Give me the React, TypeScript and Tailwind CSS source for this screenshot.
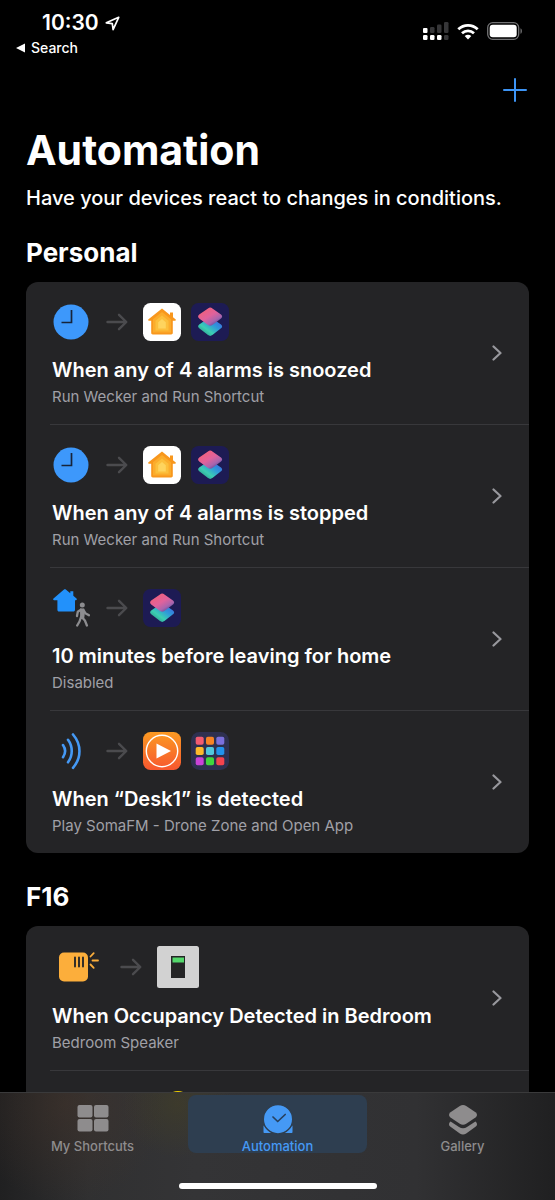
import type { ReactNode } from "react";

function Arrow() {
  return (
    <svg viewBox="0 0 22 20" className="h-5 w-[22px] shrink-0" fill="none" stroke="#4b4b4e" strokeWidth="2.400" strokeLinecap="round" strokeLinejoin="round" aria-hidden="true">
      <path d="M1.500 10H20M13 2.800 20.300 10 13 17.200" />
    </svg>
  );
}

function ClockIcon() {
  return (
    <svg viewBox="0 0 38 38" className="size-[38px]" aria-hidden="true">
      <circle cx="19" cy="19" r="17.500" fill="#3d98fb" />
      <path d="M19.500 7v12.500H9.500" fill="none" stroke="#17243a" strokeWidth="1.700" />
    </svg>
  );
}

function HomeAppIcon() {
  return (
    <svg viewBox="0 0 38 38" className="size-[38px]" aria-hidden="true">
      <rect width="38" height="38" rx="7.500" fill="#fff" />
      <path d="M19 5.500 5.500 16.300c-.7.600-.4 1.500.500 1.500h2.200v12c0 1 .6 1.600 1.600 1.600h18.400c1 0 1.600-.6 1.600-1.600v-12H32c.9 0 1.200-.9.500-1.500L30 14.300V9.500h-3v2.400Z" fill="#f8971d" />
      <path d="m19 9-9 7.300V29.500h18V16.300Z" fill="#fbac2c" />
      <path d="m19 12.500-6.500 5.300v9.700h13v-9.700Z" fill="#fcbf3c" />
      <path d="m19 16-3.800 3.200v6.300h7.600v-6.300Z" fill="#fed45e" />
    </svg>
  );
}

function ShortcutsAppIcon({ id }: { id: string }) {
  return (
    <svg viewBox="0 0 38 38" className="size-[38px]" aria-hidden="true">
      <defs>
        <linearGradient id={id + "-top"} x1="0.200" y1="0.100" x2="0.850" y2="0.900">
          <stop offset="0" stopColor="#f0607a" />
          <stop offset="0.450" stopColor="#e0629c" />
          <stop offset="0.750" stopColor="#a865ae" />
          <stop offset="1" stopColor="#54479a" />
        </linearGradient>
        <linearGradient id={id + "-low"} x1="0.200" y1="0.900" x2="0.900" y2="0.200">
          <stop offset="0" stopColor="#2f9f92" />
          <stop offset="0.300" stopColor="#3ccfb2" />
          <stop offset="0.650" stopColor="#2f9bd8" />
          <stop offset="1" stopColor="#3b6fe0" />
        </linearGradient>
      </defs>
      <rect width="38" height="38" rx="7.500" fill="#1d1b54" />
      <path d="M17 15.500c1.400-1 3-1 4.400 0l8.600 6c1.500 1.100 1.500 2.700 0 3.800l-8.600 6.800c-1.400 1.100-3 1.100-4.400 0l-8.800-6.800c-1.500-1.200-1.500-2.700 0-3.800Z" fill={"url(#" + id + "-low)"} />
      <path d="M17 5.400c1.400-1.100 3-1.100 4.400 0l8.600 6.200c1.500 1.100 1.500 2.800 0 3.900l-8.600 6.500c-1.400 1.100-3 1.100-4.400 0l-8.800-6.500c-1.500-1.100-1.500-2.800 0-3.900Z" fill={"url(#" + id + "-top)"} />
    </svg>
  );
}

function LeavingIcon() {
  return (
    <svg viewBox="0 0 38 38" className="size-[38px]" aria-hidden="true">
      <path d="M11.700.8c.8-.6 1.600-.6 2.400 0l4.200 3.400V2.300h3v4.500l3.200 2.700c.8.700.3 1.700-.7 1.700H23v9.500c0 1.200-.6 1.800-1.800 1.800h-14c-1.200 0-1.800-.6-1.800-1.800v-9.500H2.200c-1 0-1.500-1-.7-1.700Z" fill="#2291fb" />
      <circle cx="30.300" cy="16" r="2.500" fill="#8d8d90" />
      <path d="m30 21-.3 7 3.200 3.500 2 5M29 28l-1.500 4.500-2.300 4M28.800 20.700l-3 2-.8 4.300M31.500 21l2.200 3.500 3.300 1.800" fill="none" stroke="#8d8d90" strokeWidth="2.300" strokeLinecap="round" strokeLinejoin="round" />
      <path d="M28 19.600h4.200l.7 4.400-.7 5.500h-4Z" fill="#8d8d90" />
    </svg>
  );
}

function WavesIcon() {
  return (
    <svg viewBox="0 0 38 38" className="size-[38px]" fill="none" stroke="#4599f5" strokeWidth="2.600" strokeLinecap="round" aria-hidden="true">
      <path d="M11 13c2.600 3.700 2.600 8.500 0 12.200M16 7.800c5 6.600 5 15.900 0 22.500M21 2.500c8.600 10 8.600 23.300 0 33.300" />
    </svg>
  );
}

function PlayerAppIcon() {
  return (
    <svg viewBox="0 0 38 38" className="size-[38px]" aria-hidden="true">
      <defs>
        <linearGradient id="player-bg" x1="0" y1="0" x2="0" y2="1">
          <stop offset="0" stopColor="#fb9a22" />
          <stop offset="1" stopColor="#f7572f" />
        </linearGradient>
      </defs>
      <rect width="38" height="38" rx="7.500" fill="url(#player-bg)" />
      <circle cx="19" cy="19" r="15.700" fill="none" stroke="#fff" strokeWidth="1.400" />
      <path d="M13.500 11.500v15L28 19Z" fill="#fff" />
    </svg>
  );
}

const tileColors = ["#f25b70", "#f78324", "#7b70dd", "#fdb92b", "#51c8dc", "#2292ec", "#ca43d8", "#40d63d", "#f5434d"];

function GridAppIcon() {
  return (
    <svg viewBox="0 0 38 38" className="size-[38px]" aria-hidden="true">
      <rect width="38" height="38" rx="8.500" fill="#2e3050" />
      {tileColors.map((color, i) => (
        <rect key={color} x={4.7 + (i % 3) * 10.3} y={4.7 + Math.floor(i / 3) * 10.3} width="8" height="8" rx="1.800" fill={color} />
      ))}
    </svg>
  );
}

function SensorIcon() {
  return (
    <svg viewBox="0 0 52 42" className="h-[42px] w-[52px]" aria-hidden="true">
      <rect x="7" y="6.500" width="29" height="29" rx="5" fill="#fcae3b" />
      <path d="M23 11.500v9M27 11.500v9M31 11.500v9" stroke="#2b2927" strokeWidth="1.900" strokeLinecap="round" />
      <path d="m38.500 10.500 3.200-3.400M40.500 14.500h5.500M38.500 18.500l3.200 3.300" stroke="#fcae3b" strokeWidth="1.800" strokeLinecap="round" />
    </svg>
  );
}

function SwitchIcon() {
  return (
    <svg viewBox="0 0 42 42" className="size-[42px]" aria-hidden="true">
      <rect width="42" height="42" rx="2.500" fill="#d2d2d2" />
      <rect x="14" y="10" width="14" height="22" fill="#252526" />
      <rect x="15.500" y="11.500" width="11.500" height="5" fill="#54d86b" />
    </svg>
  );
}

function LampIcon() {
  return (
    <svg viewBox="0 0 42 42" className="size-[42px]" aria-hidden="true">
      <circle cx="21" cy="13" r="13" fill="#f0d000" />
    </svg>
  );
}

function Chevron() {
  return (
    <svg viewBox="0 0 10 16" className="h-4 w-[10px] shrink-0" fill="none" stroke="#98989d" strokeWidth="2.200" strokeLinecap="round" strokeLinejoin="round" aria-hidden="true">
      <path d="m1.500 1.500 7 6.500-7 6.500" />
    </svg>
  );
}

type RowProps = { lead: ReactNode; apps: ReactNode; title?: string; detail?: string };

function Row({ lead, apps, title, detail }: RowProps) {
  return (
    <li className="group">
      <button type="button" className="flex w-full items-center py-[14px] pr-[27px] pl-[26px] text-left">
        <span className="flex min-w-0 flex-1 flex-col pt-[6px]">
          <span className="mb-[14px] flex min-h-10 items-center">
            {lead}
            <span className="mr-[15px] ml-4 flex">
              <Arrow />
            </span>
            <span className="flex gap-[10px]">{apps}</span>
          </span>
          <span className="truncate text-xl leading-7 font-semibold text-white">{title}</span>
          <span className="truncate text-[15px] leading-[26px] text-[#a0a0a7]">{detail}</span>
        </span>
        <Chevron />
      </button>
      <div className="ml-6 h-px bg-[#38383b] group-last:hidden" />
    </li>
  );
}

function Section({ title, children }: { title: string; children: ReactNode }) {
  return (
    <section>
      <h2 className="mb-[13px] text-[26px] leading-8 font-bold">{title}</h2>
      <ul className="overflow-hidden rounded-xl bg-[#242426]">{children}</ul>
    </section>
  );
}

function StatusBar() {
  return (
    <header className="flex shrink-0 items-start justify-between pt-[10px] pr-8 pl-4">
      <div>
        <div className="flex items-center gap-[6px] pl-[26px] text-[21px] leading-[26px] font-semibold">
          <span>10:30</span>
          <svg viewBox="0 0 15 15" className="size-[15px]" fill="none" stroke="#fff" strokeWidth="1.700" strokeLinejoin="round" aria-hidden="true">
            <path d="M13.700 1.300 1.300 6.800l6 .8.800 6Z" />
          </svg>
        </div>
        <button type="button" className="flex items-center gap-[6px] text-[14px] leading-6 font-medium">
          <svg viewBox="0 0 9 10" className="h-[10px] w-[9px]" fill="#fff" aria-hidden="true">
            <path d="M9 .5v9L0 5Z" />
          </svg>
          Search
        </button>
      </div>
      <div className="flex h-[42px] items-center gap-2">
        <svg viewBox="0 0 26 18" className="h-[18px] w-[26px]" aria-hidden="true">
          <g fill="#fff">
            <rect y="6" width="4.500" height="5" rx="1" />
            <rect y="13" width="4.500" height="5" rx="1.300" />
            <rect x="7" y="13" width="4.500" height="5" rx="1.300" />
            <rect x="14" y="13" width="4.500" height="5" rx="1.300" />
          </g>
          <g fill="#363638">
            <rect x="7" y="5" width="4.500" height="6" rx="1.300" />
            <rect x="14" y="2.500" width="4.500" height="8.500" rx="1.300" />
            <rect x="21" y="0" width="4.500" height="11" rx="1.300" />
            <rect x="21" y="13" width="4.500" height="5" rx="1.300" />
          </g>
        </svg>
        <svg viewBox="0 0 22 17" className="h-[17px] w-[22px]" fill="none" stroke="#fff" strokeWidth="2.800" aria-hidden="true">
          <path d="M1.300 6.300c5.500-5.300 13.900-5.300 19.400 0M5 10.300c3.500-3.200 8.500-3.200 12 0" />
          <path d="M7.700 13c2-1.700 4.600-1.700 6.600 0L11 16.500Z" fill="#fff" stroke="none" />
        </svg>
        <svg viewBox="0 0 36 18" className="h-[18px] w-9" aria-hidden="true">
          <rect x=".7" y=".7" width="31" height="16.600" rx="5" fill="none" stroke="#727274" strokeWidth="1.300" />
          <rect x="2.700" y="2.700" width="27" height="12.600" rx="3" fill="#fff" />
          <path d="M33.500 6.200c1.900.7 1.900 4.900 0 5.600Z" fill="#727274" />
        </svg>
      </div>
    </header>
  );
}

function GridTabIcon() {
  return (
    <svg viewBox="0 0 32 34" className="h-[34px] w-8 shrink-0" fill="currentColor" aria-hidden="true">
      <rect x=".5" y="3" width="15" height="12.500" rx="2" />
      <rect x="17" y="3" width="14.500" height="12.500" rx="2" />
      <rect x=".5" y="17" width="15" height="12.500" rx="2" />
      <rect x="17" y="17" width="14.500" height="12.500" rx="2" />
    </svg>
  );
}

function ClockTabIcon() {
  return (
    <svg viewBox="0 0 32 34" className="h-[34px] w-8 shrink-0" aria-hidden="true">
      <path d="M1.500 23.500V30c0 .6.400 1 1 1H10ZM30.500 23.500V30c0 .6-.4 1-1 1H22Z" fill="currentColor" />
      <circle cx="16" cy="17.200" r="14.700" fill="currentColor" stroke="#2e3e50" strokeWidth="1.400" />
      <path d="m11 15 4.700 4.500 7.500-7" fill="none" stroke="#28415e" strokeWidth="1.700" strokeLinecap="round" strokeLinejoin="round" />
    </svg>
  );
}

function LayersTabIcon() {
  return (
    <svg viewBox="0 0 32 34" className="h-[34px] w-8 shrink-0" fill="currentColor" aria-hidden="true">
      <path d="M12.800 4c2-1.300 4.400-1.300 6.400 0l9.300 6.200c2 1.400 2 3.900 0 5.300l-9.300 6.300c-2 1.300-4.400 1.300-6.400 0l-9.300-6.300c-2-1.400-2-3.900 0-5.300Z" />
      <path d="M3.600 19.500 12 25.100c2.500 1.600 5.500 1.600 8 0l8.400-5.600c2.200 1.500 2.100 4 .1 5.300l-9.300 6.700c-2 1.400-4.400 1.400-6.400 0l-9.300-6.700c-2-1.300-2.100-3.800.1-5.300Z" />
    </svg>
  );
}

function Tab({ label, icon, active = false }: { label: string; icon: ReactNode; active?: boolean }) {
  return (
    <button
      type="button"
      aria-pressed={active}
      className={
        active
          ? "flex h-[58px] flex-1 flex-col items-center gap-1 rounded-lg bg-[#2e3e50] pt-[7px] text-[#4599f5]"
          : "flex h-[58px] flex-1 flex-col items-center gap-1 rounded-lg pt-[7px] text-[#8e8c8d]"
      }
    >
      {icon}
      <span className="text-[13px] leading-3 font-medium">{label}</span>
    </button>
  );
}

export default function App() {
  return (
    <div className="flex h-screen flex-col overflow-hidden bg-black font-['Inter','Liberation_Sans',sans-serif] text-white">
      <StatusBar />
      <main className="min-h-0 flex-1 overflow-y-auto px-[26px] [scrollbar-width:none]">
        <div className="flex justify-end pt-[17px] pr-[1px]">
          <button type="button" aria-label="Add" className="flex">
            <svg viewBox="0 0 26 26" className="size-[26px]" fill="none" stroke="#3d94f5" strokeWidth="2" strokeLinecap="round" aria-hidden="true">
              <path d="M13 2v22M2 13h22" />
            </svg>
          </button>
        </div>
        <h1 className="mt-[25px] text-[41px] leading-11 font-bold">Automation</h1>
        <p className="mt-3 mb-[25px] text-xl leading-7 font-medium">Have your devices react to changes in conditions.</p>
        <div className="flex flex-col gap-7">
          <Section title="Personal">
            <Row
              lead={<ClockIcon />}
              apps={<><HomeAppIcon /><ShortcutsAppIcon id="snoozed" /></>}
              title="When any of 4 alarms is snoozed"
              detail="Run Wecker and Run Shortcut"
            />
            <Row
              lead={<ClockIcon />}
              apps={<><HomeAppIcon /><ShortcutsAppIcon id="stopped" /></>}
              title="When any of 4 alarms is stopped"
              detail="Run Wecker and Run Shortcut"
            />
            <Row
              lead={<LeavingIcon />}
              apps={<ShortcutsAppIcon id="leaving" />}
              title="10 minutes before leaving for home"
              detail="Disabled"
            />
            <Row
              lead={<WavesIcon />}
              apps={<><PlayerAppIcon /><GridAppIcon /></>}
              title="When “Desk1” is detected"
              detail="Play SomaFM - Drone Zone and Open App"
            />
          </Section>
          <Section title="F16">
            <Row
              lead={<SensorIcon />}
              apps={<SwitchIcon />}
              title="When Occupancy Detected in Bedroom"
              detail="Bedroom Speaker"
            />
            <Row lead={<SensorIcon />} apps={<LampIcon />} />
          </Section>
        </div>
      </main>
      <nav className="flex shrink-0 flex-col items-center border-t border-[#3a3a3b] bg-[radial-gradient(circle_at_32%_10%,#4a441e66_0%,transparent_14%),radial-gradient(circle_at_12%_10%,#4a352866_0%,transparent_20%),linear-gradient(90deg,#202021_0%,#303031_16%,#343436_35%,#313133_75%,#202021_100%)] pt-[2px] pb-[11px]">
        <div className="mb-[30px] flex w-full gap-[6px] px-[3px]">
          <Tab label="My Shortcuts" icon={<GridTabIcon />} />
          <Tab label="Automation" icon={<ClockTabIcon />} active />
          <Tab label="Gallery" icon={<LayersTabIcon />} />
        </div>
        <div className="h-[6px] w-[198px] rounded-full bg-white" />
      </nav>
    </div>
  );
}
